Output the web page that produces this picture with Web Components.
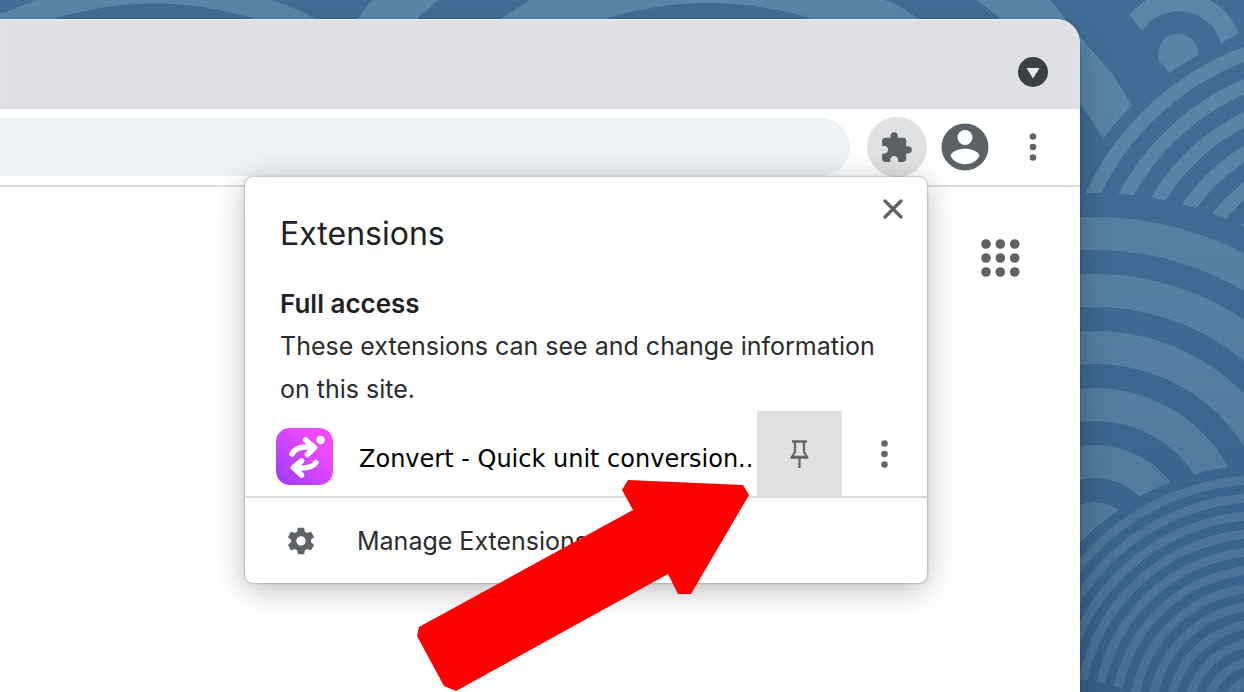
<!DOCTYPE html>
<html lang="en">
<head>
<meta charset="utf-8">
<title>Extensions</title>
<style>
  body { margin: 0; font-family: Inter, "Liberation Sans", sans-serif; color: #202124; }
</style>
</head>
<body>
<desktop-scene>
  <browser-window>
    <extensions-popup slot="popup">
      <extension-row name="Zonvert - Quick unit conversion.."></extension-row>
    </extensions-popup>
  </browser-window>
  <pointer-arrow slot="overlay"></pointer-arrow>
</desktop-scene>

<script>
function define(name, html) {
  const template = document.createElement('template');
  template.innerHTML = html;
  customElements.define(name, class extends HTMLElement {
    constructor() {
      super();
      this.attachShadow({ mode: 'open' }).append(template.content.cloneNode(true));
    }
    connectedCallback() {
      const label = this.shadowRoot.querySelector('[data-name]');
      if (label) label.textContent = this.getAttribute('name');
    }
  });
}

function rings(cx, cy, radius, step, band, base, light) {
  let out = `<circle cx="${cx}" cy="${cy}" r="${base}" fill="#3c6a93"/>`;
  for (let r = radius; r > 0; r -= step) {
    out += `<circle cx="${cx}" cy="${cy}" r="${r}" fill="${light}"/>`;
    if (r > band) out += `<circle cx="${cx}" cy="${cy}" r="${r - band}" fill="#3c6a93"/>`;
  }
  return out;
}

const buttonReset = `button { display: flex; align-items: center; justify-content: center; margin: 0; padding: 0; border: 0; background: none; color: #5f6368; font: inherit; cursor: pointer; }
  svg { display: block; }`;

define('wall-paper', `
<style>
  :host { display: block; overflow: hidden; background: #3c6a93; }
  svg { display: block; position: absolute; top: 0; right: 0; }
</style>
<svg width="1244" height="692" viewBox="0 0 1244 692" aria-hidden="true">
  <defs>
    <pattern id="weave" width="4" height="4" patternUnits="userSpaceOnUse">
      <path d="M0 0h1v1H0zM2 2h1v1H2z" fill="#fff" opacity=".07"/>
      <path d="M2 0h1v1H2zM0 2h1v1H0z" fill="#123" opacity=".07"/>
    </pattern>
    <linearGradient id="shade" x1="0" y1="0" x2="0" y2="1">
      <stop offset="0" stop-color="#4b83ac" stop-opacity=".12"/>
      <stop offset="1" stop-color="#1c4068" stop-opacity=".24"/>
    </linearGradient>
  </defs>
  <g fill="#5a87a8">
    <path d="M0 14L36 0H270Q296 7 317 20H258Q155-13 50 20H0z"/>
    <path d="M372 0H438L416 20H356zM530 0H885Q904 7 920 20H815Q708-14 602 20H498z"/>
    <path d="M977 0H1050L1080 37L1111 72L1134 108L1104 139L1080 103L1001 19z"/>
    <path d="M1129 15A65 65 0 0 1 1239 33L1221 43A44 44 0 0 0 1142 31z"/>
    <path d="M1172 76L1160 62A20 20 0 1 1 1198 57z"/>
  </g>
  ${rings(1340, 310, 280, 30, 14, 292, '#5a87a8')}
  ${rings(1095, 540, 323, 57, 33, 347, '#5885a7')}
  ${rings(1262, 716, 241, 18, 9, 251, '#527fa3')}
  <path d="M1080 680Q1104 680 1128 692H1080z" fill="#3c6a93"/>
  <rect width="1244" height="692" fill="url(#shade)"/>
  <rect width="1244" height="692" fill="url(#weave)"/>
</svg>`);

define('desktop-scene', `
<style>
  :host { display: flex; position: relative; box-sizing: border-box; min-height: 100vh; padding: 19px 164px 0 0; overflow: hidden; }
  wall-paper { position: absolute; inset: 0; }
</style>
<wall-paper></wall-paper>
<slot></slot>
<slot name="overlay"></slot>`);

define('tab-strip', `
<style>
  :host { display: flex; align-items: center; justify-content: flex-end; height: 90px; padding: 16px 32px 0 0; box-sizing: border-box; background: #dfe0e4; box-shadow: inset 0 1px 1px #ebf1f8; border-radius: 0 24px 0 0; }
  ${buttonReset}
</style>
<button aria-label="Search tabs">
  <svg width="30" height="30" viewBox="0 0 30 30"><circle cx="15" cy="15" r="15" fill="#3c4043"/><path d="M8.500 11h13L15 21.500z" fill="#e8eaed"/></svg>
</button>`);

define('tool-bar', `
<style>
  :host { display: flex; align-items: center; gap: 8px; height: 78px; box-sizing: border-box; padding-right: 17px; background: #fff; border-bottom: 2px solid #dadce0; }
  input { flex: 1; min-width: 0; height: 58px; box-sizing: border-box; margin: 0 9px 0 0; padding: 0 24px; border: 0; border-radius: 0 29px 29px 0; background: #eff2f4; font: inherit; outline: 0; }
  ${buttonReset}
  button { width: 60px; height: 60px; border-radius: 50%; }
  .active { background: #e1e1e2; }
</style>
<input type="text" aria-label="Address bar">
<button class="active" aria-label="Extensions">
  <svg width="34" height="34" viewBox="0.500 -0.500 24 24"><path fill="#5c6166" d="M20.500 11H19V7c0-1.100-.9-2-2-2h-4V3.500a2.500 2.500 0 0 0-5 0V5H4c-1.100 0-1.990.9-1.990 2v3.800H3.500c1.490 0 2.700 1.210 2.700 2.700s-1.210 2.700-2.700 2.700H2V20c0 1.100.9 2 2 2h3.800v-1.500c0-1.490 1.210-2.700 2.700-2.700s2.700 1.210 2.700 2.700V22H17c1.100 0 2-.9 2-2v-4h1.500a2.500 2.500 0 0 0 0-5z"/></svg>
</button>
<button aria-label="Profile">
  <svg width="48" height="48" viewBox="0 0 48 48"><circle cx="24" cy="24" r="23.500" fill="#5c6166"/><circle cx="24" cy="14.500" r="7.500" fill="#fff"/><path d="M9.500 32.500C13 23.500 35 23.500 38.500 32.500C34 44 14 44 9.500 32.500z" fill="#fff"/></svg>
</button>
<button aria-label="Menu">
  <svg width="8" height="30" viewBox="0 0 8 30" fill="currentColor"><circle cx="4" cy="4.500" r="3.300"/><circle cx="4" cy="15" r="3.300"/><circle cx="4" cy="25.500" r="3.300"/></svg>
</button>`);

define('page-view', `
<style>
  :host { display: flex; flex: 1; align-items: flex-start; justify-content: flex-end; padding: 41px 50px 0 0; background: #fff; }
  ${buttonReset}
  button { width: 60px; height: 60px; color: #606164; }
</style>
<button aria-label="Apps">
  <svg width="40" height="38" viewBox="0 0 40 38" fill="currentColor">
    <circle cx="6" cy="5" r="4.800"/><circle cx="20.300" cy="5" r="4.800"/><circle cx="34.700" cy="5" r="4.800"/>
    <circle cx="6" cy="19" r="4.800"/><circle cx="20.300" cy="19" r="4.800"/><circle cx="34.700" cy="19" r="4.800"/>
    <circle cx="6" cy="33" r="4.800"/><circle cx="20.300" cy="33" r="4.800"/><circle cx="34.700" cy="33" r="4.800"/>
  </svg>
</button>`);

define('browser-window', `
<style>
  :host { display: flex; flex: 1; flex-direction: column; position: relative; min-width: 0; border-radius: 0 24px 0 0; box-shadow: 0 0 2px rgba(0,0,0,.3), 0 16px 32px rgba(0,0,0,.25); }
  ::slotted([slot=popup]) { position: absolute; top: 158px; right: 153px; }
</style>
<tab-strip></tab-strip>
<tool-bar></tool-bar>
<page-view></page-view>
<slot name="popup"></slot>`);

define('extension-row', `
<style>
  :host { display: flex; align-items: stretch; height: 85px; padding-left: 31px; border-bottom: 2px solid #dadada; }
  ${buttonReset}
  .logo { align-self: center; flex: none; margin: 6px 26px 0 0; }
  .name { flex: 1; min-width: 0; margin-top: 10px; align-self: center; font: 24px/32px "DejaVu Sans", sans-serif; color: #000; white-space: nowrap; }
  button { flex: none; width: 85px; }
  .pin { background: #e1e1e1; }
</style>
<svg class="logo" width="57" height="57" viewBox="0 0 57 57" aria-hidden="true">
  <defs><linearGradient id="g" x1="0" y1="1" x2="1" y2="0"><stop offset="0" stop-color="#9a3cf8"/><stop offset=".7" stop-color="#ee48fc"/><stop offset="1" stop-color="#f24bfd"/></linearGradient></defs>
  <rect width="57" height="57" rx="14" fill="url(#g)"/>
  <g fill="none" stroke="#fff" stroke-width="5.500" stroke-linecap="round" stroke-linejoin="round">
    <path d="M16 26Q21 17.500 35 19.500M29.500 12L38.500 19.500L31.500 26.500"/>
    <path d="M40 34.500Q35 41.500 20 39.500M25.500 33L17.500 39.500L25.500 47"/>
  </g>
  <path d="M30 12.500L40 19.500L32 26zM25 34L17 39.500L25 46z" fill="#fff"/>
  <circle cx="44.500" cy="12" r="4.200" fill="#fff"/>
</svg>
<span class="name" data-name></span>
<button class="pin" aria-label="Pin">
  <svg width="20" height="30" viewBox="0 0 20 30" fill="none" stroke="#666" stroke-width="2.300"><path d="M2 2.500H17M5 2.500V13L2 18H17L14 13V2.500M1 18.500H18M9.500 18V29"/></svg>
</button>
<button aria-label="More options">
  <svg width="8" height="30" viewBox="0 0 8 30" fill="#666"><circle cx="3.500" cy="4.500" r="3.300"/><circle cx="3.500" cy="15" r="3.300"/><circle cx="3.500" cy="25.500" r="3.300"/></svg>
</button>`);

define('extensions-popup', `
<style>
  :host { display: block; box-sizing: border-box; width: 682px; background: #fff; border-radius: 8px; box-shadow: 0 0 2px rgba(0,0,0,.5), 0 6px 32px rgba(0,0,0,.28); }
  ${buttonReset}
  header { display: flex; justify-content: space-between; align-items: flex-start; padding: 12px 14px 0 35px; }
  h1 { margin: 25px 0 28px; font-size: 32px; line-height: 40px; font-weight: 400; }
  header button { width: 40px; height: 40px; }
  section { padding: 0 35px; font-size: 25px; line-height: 43px; }
  h2 { margin: 0; font-size: 26px; line-height: 43px; font-weight: 600; }
  p { margin: 0; color: #2b2c2f; }
  .manage { justify-content: flex-start; width: 100%; height: 85px; padding-left: 42px; gap: 42px; font-size: 25px; color: #2b2c2f; }
</style>
<header>
  <h1>Extensions</h1>
  <button aria-label="Close"><svg width="20" height="20" viewBox="0 0 20 20" fill="none" stroke="#5f6062" stroke-width="3.200" stroke-linecap="round"><path d="M2 2L18 18M18 2L2 18"/></svg></button>
</header>
<section>
  <h2>Full access</h2>
  <p>These extensions can see and change information on this site.</p>
</section>
<slot></slot>
<button class="manage">
  <svg width="28" height="28" viewBox="1.500 1.500 21 21"><path fill="#5f6368" d="M19.430 12.980c.04-.32.07-.64.07-.98s-.03-.66-.07-.98l2.110-1.650c.19-.15.24-.42.12-.64l-2-3.460c-.12-.22-.39-.3-.61-.22l-2.490 1c-.52-.4-1.080-.73-1.690-.98l-.38-2.650A.49.49 0 0 0 14 2h-4c-.25 0-.46.18-.49.420l-.38 2.650c-.61.25-1.170.59-1.690.98l-2.490-1c-.23-.09-.49 0-.61.22l-2 3.460c-.13.22-.07.49.12.64l2.110 1.650c-.04.32-.07.65-.07.98s.03.66.07.98l-2.110 1.650c-.19.15-.24.42-.12.64l2 3.460c.12.22.39.3.61.22l2.490-1c.52.4 1.080.73 1.690.98l.38 2.650c.03.24.24.42.49.42h4c.25 0 .46-.18.49-.42l.38-2.650c.61-.25 1.170-.59 1.690-.98l2.490 1c.23.09.49 0 .61-.22l2-3.460c.12-.22.07-.49-.12-.64l-2.110-1.650zM12 15.500c-1.930 0-3.500-1.570-3.500-3.500s1.570-3.500 3.500-3.500 3.500 1.570 3.500 3.500-1.570 3.500-3.500 3.500z"/></svg>
  <span>Manage Extensions</span>
</button>`);

define('pointer-arrow', `
<style>
  :host { display: block; position: absolute; top: 479px; right: 495px; pointer-events: none; }
  svg { display: block; }
</style>
<svg width="332" height="213" viewBox="417 479 332 213" aria-hidden="true"><path fill="#f00" d="M417 636L419 627L633 510L622 490L628 480L743 485L749 495L691 594H678L668 574L456 691L444 686z"/></svg>`);
</script>
</body>
</html>
